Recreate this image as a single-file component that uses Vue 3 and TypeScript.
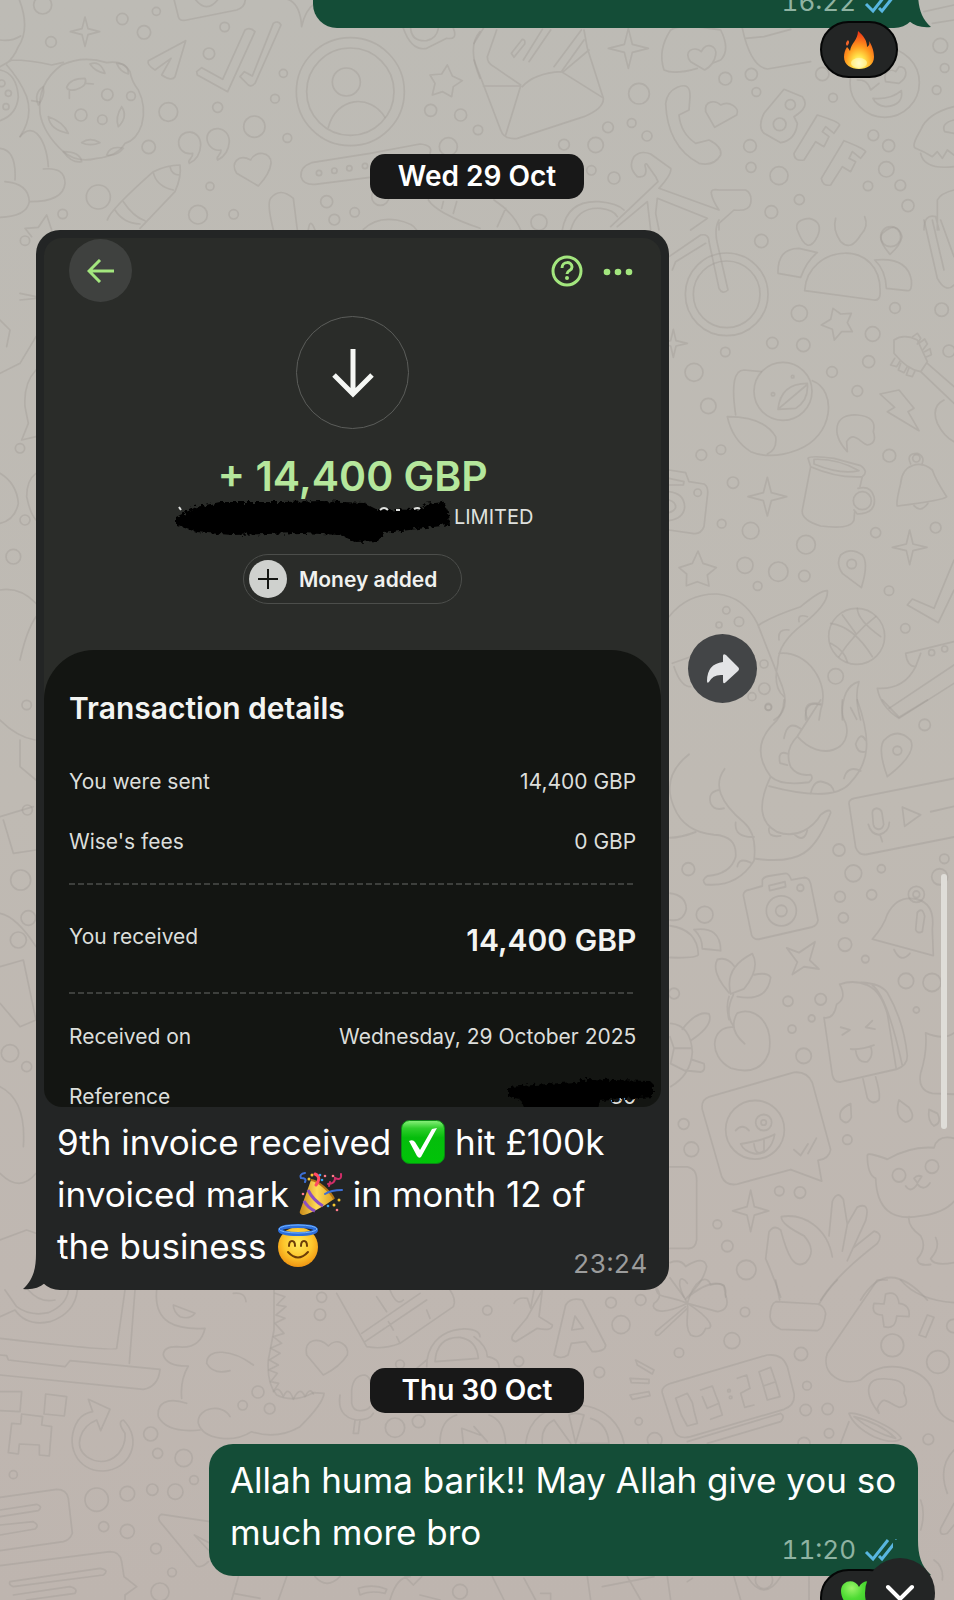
<script setup lang="ts">
interface Doodle {
  x: number
  y: number
  sy?: number
  paths: string[]
  dots: number[][]
}

interface Detail {
  label: string
  value: string
  kind: 'plain' | 'total' | 'hidden'
}

const UNIT = 1 / 3

const sparkle = (x: number, y: number, r: number): string => {
  const i = Math.round(r / 5)
  return `M${x} ${y - r}L${x + i} ${y - i}L${x + r} ${y}L${x + i} ${y + i}L${x} ${y + r}L${x - i} ${y + i}L${x - r} ${y}L${x - i} ${y - i}Z`
}

const place = (d: Doodle): string => `translate(${d.x} ${d.y}) scale(${UNIT} ${d.sy ?? UNIT})`

// Dots stay round in tiles whose vertical unit differs.
const dotHeight = (d: Doodle, r: number): number => (r * UNIT) / (d.sy ?? UNIT)

// Wallpaper tiles, drawn at three units per pixel.
const doodles: Doodle[] = [
  {
    x: 0,
    y: 0,
    paths: [
      'M50-20Q95 80 55 140Q40 175 20 190M0 120Q35 125 62 108M0 200L35 180Q90 180 155 195L190 187M20 195Q60 240 80 290Q100 350 60 410M0 210Q50 220 55 290Q50 345 0 362M95 302L118 306',
      'M185 195Q250 165 320 188Q370 180 390 215Q395 245 415 270Q440 320 425 375Q410 420 375 430Q350 470 290 475Q230 490 190 455Q130 400 120 340Q110 250 185 195Z',
      'M200 262Q210 235 255 235Q265 255 230 268Q205 275 200 262M258 250L280 252M208 275V295M270 192Q300 180 315 220Q285 215 270 192M350 190Q385 190 385 222Q360 215 350 190M130 260Q100 280 115 315Q135 290 130 260M145 350Q150 390 205 400Q190 365 145 350M245 428Q270 410 300 428Q270 440 245 428M365 320Q385 350 355 380Q345 350 365 320M190 455Q215 490 245 485Q240 455 190 455M320 465Q330 435 370 445Q350 470 320 465',
      'M60 410Q85 380 110 400Q140 430 145 500M130 507Q195 500 195 550Q190 605 90 605M0 445Q50 450 45 540M15 545Q85 550 88 605Q80 650 0 652',
      'M520-10L535 50Q540 65 560 60L710 30Q740 20 735-10M580-10Q620 50 660-10M850-5Q900 0 905 80M905 80Q915 30 945 10',
      'M557 122L525 230Q515 245 485 225L513 175L465 210Q440 195 445 182Z',
      'M590 215L605 203L668 238L735 90Q750 80 765 95L683 275L592 225ZM720 230L733 215L757 228L820 70Q835 60 843 75L765 250Q755 262 745 255Z',
      'M985 382C1010 290 1110 280 1155 352M1210 85Q1235 155 1280 145L1340 115Q1375 120 1360 85M1232 85Q1235 125 1280 122Q1310 115 1315 85M1440 95Q1400 140 1440 235',
      'M1342 195L1357 228L1387 242L1360 260L1355 290L1328 275L1297 285L1305 250L1290 225L1325 222Z',
      'M568 490C560 480 580 475 578 460C550 465 535 445 536 425C540 385 602 385 602 435Q600 475 568 490M653 480C645 470 665 465 663 450C635 455 620 430 621 412C625 375 687 375 688 425Q685 465 653 480',
      'M775 558L710 520C690 490 715 460 752 480C765 450 815 455 813 490Q810 520 775 558Z',
      'M322 660Q330 630 460 515Q500 495 540 495Q545 530 525 575L420 685M460 518Q470 560 520 570M345 630Q370 670 420 672M370 605Q400 650 435 662M510 500Q515 525 538 525',
      'M1110 460L1260 432Q1300 435 1290 460M1110 460L935 488Q900 500 903 530Q910 555 945 553L1110 532M820 690Q800 610 812 595Q840 560 880 595L892 690M925 690Q930 650 945 690M1090 688Q1130 650 1190 660Q1240 670 1250 690M1285 600Q1310 640 1440 685M1330 605L1325 625M1370 605L1360 640',
      'M75 685L95 710M78 685L115 682L140 645L155 690',
      sparkle(255, 95, 44)
    ],
    dots: [[128, 15, 27], [367, 57, 17], [432, 97, 20], [469, 34, 12], [153, 126, 16], [674, 81, 14], [627, 161, 17], [850, 220, 12], [825, 296, 13], [653, 322, 15], [505, 336, 28], [763, 380, 32], [862, 414, 13], [446, 441, 20], [630, 559, 12], [295, 591, 36], [594, 644, 28], [701, 643, 14], [188, 642, 14], [1292, 331, 18], [1382, 345, 18], [1345, 440, 27], [980, 605, 18], [1064, 637, 14], [1003, 659, 16], [1141, 590, 26], [1051, 275, 162], [1051, 275, 131], [1039, 246, 42], [322, 284, 17], [393, 288, 13], [243, 345, 18], [307, 359, 14], [957, 519, 8], [1003, 512, 8], [1048, 505, 8], [1095, 498, 8], [5, 250, 10], [25, 280, 9], [18, 320, 9]]
  },
  {
    x: 474,
    y: 0,
    paths: [
      'M0 130L28 85M68 90L40 170Q40 190 60 200L140 255M0 180L80 390Q90 420 130 415L330 350Q390 325 388 295L340 145L330 90M28 258H140L95 405M145 260Q180 220 262 215L385 292M262 215L330 120M268 215L345 150M112 160L145 118Q155 118 152 132L120 172ZM148 180L205 88M165 185L230 90M240 200L322 90',
      'M590 90Q550 150 570 210Q600 225 670 205M590 90Q620 70 740 90Q770 150 740 180L715 190M692 210L650 185C625 155 660 135 682 155C695 125 730 135 725 165Q720 195 692 210Z',
      'M805 85Q830 200 880 207L1010 185M815 115L870 110L950 88M1350 35L1440 15M1375 70L1440 60',
      'M610 262Q650 245 648 290L645 330L615 345Q620 400 665 430L705 420Q745 440 740 465Q720 500 675 490Q580 440 575 310Q580 275 610 262Z',
      'M722 382L695 335C690 300 725 300 740 315C765 300 800 325 788 345Z',
      'M930 268L870 340Q850 380 870 400L920 428Q965 420 970 370L960 350Q1010 320 985 290Z',
      'M1030 345L960 460Q960 485 990 480L1025 425L1050 440L1065 410L1045 395L1055 380L1080 400L1097 375Q1095 365 1030 345ZM1110 422L1042 535Q1045 560 1070 555L1105 500L1130 515L1145 485L1125 475L1135 455L1160 475L1175 455Q1170 445 1110 422Z',
      'M1275 200C1300 200 1305 230 1275 250L1235 245C1225 215 1250 205 1265 215ZM1150 240C1165 240 1180 240 1190 270L1215 250M1197 295Q1250 300 1282 272Q1290 315 1235 320Q1205 315 1197 295Z',
      'M1440 320Q1360 340 1340 390Q1310 440 1325 445Q1350 455 1375 470L1390 455L1405 475L1420 450L1440 465M1340 460Q1350 510 1440 500M1440 360Q1400 370 1412 395L1440 400',
      'M410 680L552 545L545 530L518 492Q510 490 515 505Q520 535 490 530Q460 500 480 470Q500 450 530 462L590 505Q595 520 555 565L735 630Q715 600 712 580Q710 565 735 570H815Q835 580 830 610Q825 635 780 630L735 670V690M550 595L545 640L555 690M550 595L700 655L650 690M430 680L520 605L530 690M265 690Q280 600 375 605Q430 610 450 630M290 690Q310 620 380 625Q420 630 430 650M60 600Q120 640 140 690M95 625L70 680M1390 690V600Q1400 580 1440 570M1350 690Q1350 640 1385 650L1395 690',
      sparkle(463, 145, 60)
    ],
    dots: [[495, 281, 31], [754, 236, 19], [832, 223, 18], [847, 276, 13], [1045, 222, 20], [1077, 293, 13], [1399, 137, 22], [1412, 204, 13], [1388, 270, 13], [402, 382, 16], [473, 369, 13], [519, 408, 15], [365, 435, 23], [270, 434, 16], [828, 438, 19], [831, 502, 15], [915, 527, 27], [1198, 406, 16], [1244, 437, 18], [1237, 508, 23], [1279, 556, 16], [1182, 558, 14], [1302, 617, 18], [976, 599, 15], [892, 636, 19], [420, 534, 18], [352, 511, 14], [12, 390, 14], [195, 667, 24], [1250, 710, 30], [917, 373, 19], [949, 314, 15], [1232, 248, 104]]
  },
  {
    x: 654,
    y: 220,
    paths: [
      'M45 110L140 45Q165 40 165 65L195 205Q205 225 222 210L190 70Q180 25 195 0M55 150L65 125L155 70M810 0L850 175Q875 220 900 195M835 0L870 150M860 0L900 110',
      'M372 160Q370 85 435 85L490 98Q460 120 440 172ZM452 212C460 70 690 50 678 225Q675 242 660 240ZM662 120Q760 110 772 180Q775 215 760 212L697 205Q695 150 662 120Z',
      'M465-5Q420 0 430 30Q460 110 490 50Q510 5 465-5M545-5Q535 30 560 65Q590 95 620 45Q645 20 632-10M708 103Q740 75 744 50Q730 0 685 40Q670 60 708 103Z',
      'M537 265L560 282L592 280L580 308L595 335L563 335L541 360L535 328L502 315L530 298Z',
      'M245 585Q225 450 270 450L322 455M475 482C550 510 540 650 430 690Q350 720 290 695Q235 660 220 590Q330 590 365 650Q370 690 340 702M372 568Q380 490 460 490Q465 540 425 565ZM375 565L458 495',
      'M580 695C530 640 540 580 610 585Q670 590 658 635Q670 670 640 675C620 670 600 630 578 665ZM678 522L735 510L780 565L762 575L795 632L700 575L722 562Z',
      'M720 360Q750 340 790 360L820 425L800 455Q760 450 720 400ZM820 430L900 500M800 455L900 550M870 540Q830 560 850 610Q870 650 900 665M776 350L790 340L800 355L790 372M795 370L812 357L820 372L806 390M812 395L828 386L832 404L815 412M722 415L710 435L728 440L737 425M740 430L733 450L750 458L760 440M765 443L757 465L775 470L782 455',
      'M462 715Q470 705 540 715L620 737Q645 755 625 770Q550 775 470 740ZM480 718Q550 715 615 752Q560 765 480 732ZM470 740L445 870Q440 900 500 918Q590 930 600 900L602 875M625 770L618 800M612 805Q650 795 660 830Q670 880 610 882L600 870',
      'M740 790C745 730 800 720 835 750Q845 780 878 830Q870 840 730 858Q725 850 740 790M780 857Q800 880 822 850M770 732Q755 700 790 700Q815 710 803 735',
      'M45 750L95 758L105 785L150 792Q165 800 160 830L150 920Q140 945 115 940L45 930M45 775L90 785L88 795L45 795M45 815Q90 820 92 860Q90 895 45 902M45 840Q65 845 65 862Q60 875 45 878',
      'M132 993L147 1030L187 1043L160 1065L165 1098L130 1085L97 1097L98 1062L75 1043L115 1030Z',
      'M622 1103L565 1060Q545 1030 560 1005Q590 980 625 1005Q645 1030 622 1103ZM900 1020L840 1165L775 1137L760 1155L853 1208L900 1110',
      'M45 1190Q100 1120 190 1122Q270 1130 310 1210L385 1400Q410 1470 360 1500M315 1215Q350 1190 440 1160Q500 1110 520 1112Q525 1150 450 1210Q370 1270 372 1330Q355 1400 390 1430M375 1300C460 1290 530 1390 500 1470L495 1500M375 1260Q370 1225 405 1230M435 1205Q430 1180 460 1190M455 1500Q450 1440 500 1455M55 1330L110 1310M60 1340Q80 1400 110 1400',
      'M530 1210Q600 1220 655 1310M610 1165Q610 1200 680 1250M530 1270Q570 1290 580 1325M555 1310Q600 1240 665 1190M565 1185L605 1240',
      'M755 1300L900 1265M755 1300Q760 1340 785 1340L800 1300M785 1340Q750 1410 670 1405Q680 1460 735 1495L900 1390M705 1465L900 1335M615 1385Q560 1400 565 1500M615 1385Q600 1430 620 1500',
      sparkle(340, 830, 58),
      sparkle(767, 982, 52),
      sparkle(58, 370, 42)
    ],
    dots: [[218, 223, 124], [218, 223, 100], [322, 63, 20], [436, 280, 24], [723, 264, 16], [863, 269, 20], [656, 342, 22], [448, 375, 20], [355, 369, 17], [214, 396, 14], [120, 457, 27], [163, 558, 23], [534, 456, 16], [644, 425, 18], [610, 513, 16], [885, 393, 18], [387, 514, 87], [357, 523, 5], [416, 470, 4], [142, 705, 16], [201, 689, 14], [706, 707, 19], [237, 788, 17], [203, 911, 13], [290, 932, 25], [456, 974, 28], [273, 1036, 24], [373, 1055, 29], [451, 1068, 17], [311, 1098, 13], [665, 938, 15], [845, 923, 16], [705, 1112, 14], [593, 1032, 14], [608, 1249, 84], [545, 1369, 23], [754, 1225, 14], [217, 1171, 11], [255, 1205, 14], [195, 1215, 9], [330, 1332, 12], [331, 1406, 17], [343, 1462, 9], [294, 1430, 12], [787, 715, 11], [625, 842, 27], [131, 818, 11], [833, 1298, 9], [872, 1287, 9]]
  },
  {
    x: 654,
    y: 700,
    sy: 0.3827,
    paths: [
      'M390 0Q390 40 350 70Q290 130 350 200Q380 225 465 215Q480 205 470 195Q430 200 410 175Q390 130 430 95L500 0M430 95C500 165 600 130 575 60Q560 40 565 0M610 0C650 100 650 160 590 215Q540 270 345 225M350 200Q290 310 370 345C430 365 480 330 500 300Q530 280 530 295C480 400 440 430 305 415M390 100Q400 50 440 75M460 50Q440 0 500 10M605 115Q620 80 635 105M635 135Q610 140 605 115M570 205Q580 170 620 185M470 245Q480 205 510 215Q535 220 540 240M345 335Q340 360 380 355M420 350Q450 375 460 340M400 140Q370 130 378 165L400 170M590 20L608 50',
      'M105 142Q20 200 60 280Q90 345 180 352Q250 355 245 410Q230 455 160 460Q140 470 155 482Q250 490 300 420Q310 350 270 320Q160 240 212 180M48 360Q80 360 125 345M195 235Q160 240 170 270Q180 290 210 283M245 320Q240 360 300 358M250 435Q255 410 290 425',
      'M585 270Q585 260 600 257L900 205M585 270L605 385Q615 408 640 403L900 358M655 295Q655 285 668 283Q682 285 684 295L689 325Q685 340 670 337Q660 335 658 325ZM643 325Q650 350 675 352Q705 345 706 320M678 352L685 370M745 280L800 300L752 330ZM830 292L900 278',
      'M685 0L735 45L820 0M700 200Q670 130 690 105Q730 70 770 105Q790 140 700 200',
      'M268 510Q270 498 285 496L325 486V470Q330 462 345 460L395 453Q405 453 412 470L450 464Q465 464 470 480L492 575Q490 588 475 593L315 625Q300 627 293 615ZM345 485L393 475L395 488L347 498Z',
      'M655 625Q690 590 700 560Q730 510 785 520Q845 530 835 600L838 668ZM785 600L790 555Q805 540 812 565L805 605Q790 612 785 600M720 652Q740 690 768 662',
      'M225 765Q170 710 190 678Q220 670 240 695M230 768Q210 700 295 663Q320 700 270 755L230 768M300 718Q340 710 350 725Q340 790 250 775M238 770Q210 820 240 855M225 775Q215 800 225 835M240 855C170 850 160 930 230 962Q320 985 345 920C360 840 300 800 250 818Q220 860 272 898',
      'M557 743Q600 730 640 745Q680 760 700 820L727 965L560 998Q540 1000 535 980L510 830Q540 835 548 795Q580 780 557 743M620 738Q680 740 700 765Q750 840 760 930Q760 955 727 965M655 745Q700 775 745 955M560 855L588 862L565 875M655 838L635 855L663 860M590 912Q620 915 660 902M605 915Q610 950 640 945Q660 930 650 905M627 990L640 1040Q655 1060 675 1045Q680 1030 665 985',
      'M145 1070Q140 1045 165 1037L420 973Q460 970 475 1000L530 1175Q525 1200 492 1203L503 1257L410 1227L250 1265Q215 1270 203 1245ZM245 1125Q265 1105 285 1125M260 1160Q330 1150 362 1135C355 1170 330 1190 300 1185Q270 1180 260 1160M300 1160Q305 1195 330 1178V1150M420 1175L440 1190L462 1160M462 1185L487 1145',
      'M590 1055Q550 1070 560 1095Q580 1115 592 1090ZM735 1045Q720 1090 755 1103Q790 1095 765 1065ZM825 1070Q820 1100 840 1113Q865 1105 850 1080Z',
      'M815 870Q870 890 900 870M815 870Q820 920 800 975Q790 1020 835 1028L900 1030M640 1190Q640 1180 700 1200Q770 1165 840 1170Q850 1135 900 1145M640 1190Q640 1240 665 1250Q670 1370 800 1348Q870 1340 900 1310M755 1270Q770 1290 790 1265Q810 1285 828 1262M780 1250Q790 1240 803 1245L790 1262ZM765 1350Q760 1375 800 1400Q820 1430 790 1460Q790 1480 830 1475M845 1405Q860 1430 830 1460Q840 1480 900 1470',
      'M380 1560Q360 1510 335 1460L345 1390Q360 1370 380 1385C400 1450 420 1490 455 1470Q490 1440 450 1400Q380 1370 382 1350C450 1340 520 1380 535 1455M525 1400L535 1310Q550 1280 568 1305L580 1370L565 1440M580 1370L610 1325Q650 1310 635 1360L580 1465M600 1430L660 1388Q690 1395 670 1420Q550 1500 500 1568M620 1568Q700 1450 820 1568',
      'M48 590Q130 600 133 665Q130 675 48 673M120 600Q200 590 200 655L145 650Q145 620 120 600M48 505Q95 510 97 545Q90 580 48 575M85 860Q130 810 165 820Q180 850 110 890M50 845Q110 850 115 920Q110 980 50 1010M60 910H112M60 910L48 880M60 910L50 950L95 970M115 940L150 950Q155 970 140 972L95 968M48 1220H100Q130 1225 128 1260V1410Q125 1435 100 1433H48M48 1470Q80 1460 95 1480Q150 1450 158 1480Q150 1520 95 1565Q170 1510 210 1530L215 1560M48 1510L90 1560',
      'M398 648L435 660L483 632L467 680L495 703L450 697L415 717L430 685Z',
      sparkle(290, 1335, 54)
    ],
    dots: [[343, 18, 10], [812, 65, 17], [730, 132, 13], [555, 392, 18], [598, 453, 25], [682, 441, 12], [871, 415, 14], [857, 462, 24], [103, 442, 19], [558, 514, 16], [653, 509, 15], [568, 569, 15], [573, 639, 20], [634, 677, 11], [382, 551, 45], [382, 551, 17], [439, 491, 10], [787, 508, 24], [787, 508, 10], [756, 734, 23], [834, 738, 27], [787, 810, 9], [402, 787, 15], [500, 782, 17], [473, 832, 10], [414, 860, 12], [449, 930, 23], [89, 1108, 16], [112, 1174, 22], [580, 1149, 14], [376, 1283, 14], [438, 1287, 17], [190, 1370, 13], [220, 1427, 17], [277, 1489, 29], [303, 1123, 88], [329, 1104, 24], [329, 1104, 8], [152, 561, 25], [735, 1242, 20], [834, 1219, 20], [60, 767, 16]]
  },
  {
    x: 0,
    y: 1280,
    paths: [
      'M0 110L45 90Q80 140 150 125Q225 100 232 30M15 30L50 80Q90 110 145 98Q200 75 205 30M85 30Q120 70 165 60M375 30L350 205Q345 215 0 175M405 30L388 250M0 225L20 227L25 240L195 260L210 242L480 268Q475 320 430 328L0 285',
      'M470 30C460 130 530 150 615 145Q600 210 530 200Q490 200 490 225Q500 260 565 258Q540 300 545 355M520 75L585 100Q570 120 540 110Q520 95 520 75M700 40Q735 35 738 65M760 255C700 210 620 200 620 250Q640 285 690 272M560 370C500 350 470 370 475 410Q500 460 600 450M690 410C670 370 590 380 595 430C610 480 700 490 755 455Q830 480 900 440Q970 370 972 340L940 338Q880 370 830 345Q800 310 805 240L822 150V30',
      'M825 40L855 50L830 75L858 80L828 105L855 115L825 130L852 160L820 170L845 190L812 205L840 220L808 240L835 255L806 270L832 280L812 305L836 310L820 335Q835 315 850 350Q865 315 880 358Q900 315 915 350Q930 320 940 342',
      'M970 285L920 225C910 175 960 170 985 198C1010 170 1050 195 1042 225Q1020 260 970 285ZM1010 40L1100 200Q1150 210 1200 190L1360 80Q1370 60 1350 30M1085 160L1260 40M1095 185L1280 60M1130 50L1160 95M1165 125L1180 150M1190 170L1200 190M1280 90L1290 115M1170 30Q1190 80 1210 60M1280 260C1280 130 1440 130 1440 170M1305 245Q1310 170 1380 172Q1430 180 1435 235ZM1250 265L1280 240',
      'M1055 330Q1060 285 1095 285Q1110 290 1112 310M1055 330V370Q1060 395 1085 392Q1105 390 1110 380M1020 345Q1010 410 1070 420Q1110 420 1120 400M1065 420L1060 460H1075L1080 420M1320 490Q1320 420 1370 405M1385 445L1440 465M1385 445L1390 490',
      'M0 335L65 335L60 395L0 392M137 342L200 350L193 408L132 402ZM65 402L128 410L125 435L155 440L148 528L118 525V495L58 492L55 522L25 518L35 430L62 432Z',
      'M265 358L330 388L302 452L290 420C240 440 220 500 260 530C320 570 380 520 375 460Q350 425 370 420C430 480 390 570 310 573C230 575 190 490 235 420Q250 400 278 395Z',
      'M0 652L170 628Q200 628 205 655L217 760Q210 780 190 785L0 812M0 690L110 673Q130 680 115 692L0 710M0 735L100 725Q120 735 105 747L0 765M0 857L330 815Q360 815 365 845L372 890L410 920L375 945V960M30 905L300 865Q330 870 310 885L40 920Q25 915 30 905M40 945L210 920Q235 925 225 940L80 960',
      'M630 725L485 703Q470 710 480 725L590 858Q605 865 625 845M583 765L630 790M583 765L625 810M715 890L695 960M860 890L835 960M700 940L780 955M945 890Q980 930 1020 890M1170 960Q1190 890 1230 890M1215 890L1240 915L1265 890M1075 925Q1120 910 1160 928L1155 940Q1110 930 1080 945ZM1260 945L1320 960'
    ],
    dots: [[965, 52, 15], [960, 104, 17], [1200, 253, 13], [774, 336, 18], [728, 376, 14], [809, 386, 16], [452, 462, 21], [473, 520, 15], [551, 534, 26], [582, 600, 13], [457, 629, 17], [526, 635, 23], [382, 641, 22], [290, 659, 35], [311, 740, 15], [382, 754, 21], [468, 806, 16], [516, 877, 13], [480, 936, 27], [40, 584, 12], [1185, 443, 29], [1256, 424, 19], [1380, 935, 22]]
  },
  {
    x: 474,
    y: 1280,
    paths: [
      'M120 70Q130 50 160 55L170 85L180 30M205 30L195 110L235 135Q235 155 190 145L125 185Q105 180 120 160L158 115ZM240 225L275 75Q290 50 325 60L395 195Q395 215 355 215L335 185L292 190L282 225Q260 240 240 225M293 150L303 108L328 145Z',
      'M640 70C570 40 550 60 545 20M640 70C560 110 530 90 540 70Q570 50 545 20M640 70C600 0 620 -20 640 10M640 70C660 0 700 -20 710 15Q760 0 755 45Q770 90 730 95L640 70C720 120 720 150 695 145Q680 180 650 165C630 140 645 100 640 70M635 80L545 155Q540 170 555 165L640 85',
      'M905 65Q890 70 888 110Q890 135 920 148L1030 152Q1050 145 1055 100Q1050 75 1030 72ZM917 60L905 0M1035 72Q1060 30 1090 0M1240 0L1210 0L1060 220C1040 280 1100 320 1160 300Q1210 250 1280 262Q1370 280 1380 350Q1390 410 1440 425M1280 0Q1330 60 1440 68',
      'M1235 42Q1270 30 1275 70Q1310 75 1305 110L1268 108Q1265 150 1230 140L1225 105Q1190 105 1200 70L1230 72ZM1335 165L1360 105L1380 112L1355 172ZM1215 400C1170 340 1170 290 1240 297Q1300 300 1290 340Q1310 380 1275 382C1240 370 1230 340 1210 385ZM1125 400C1150 395 1260 440 1282 475Q1260 495 1200 470Q1140 440 1125 400ZM1140 410Q1200 460 1265 475Q1220 430 1140 410M1125 425L1100 490',
      'M565 340Q560 320 590 310L880 225Q925 220 940 260L960 340Q965 375 930 388L650 470Q610 480 600 450ZM640 485L920 400Q935 410 920 425L700 490M485 240L540 270L535 282L490 255ZM468 295L525 298V310L472 308ZM468 345L525 335L528 347L475 358Z',
      'M605 355L640 340L655 368L660 392L670 430L640 438L622 405ZM680 330L715 318L725 345L735 370L700 385L685 350M735 372L745 405L710 418M790 295L818 285L828 325L800 340L812 382L840 375M855 275L890 262L905 305L868 318ZM868 318L880 360L918 350L905 305',
      'M0 170Q40 200 40 230Q75 235 75 262M45 405Q90 420 95 490M0 440L40 485M155 490Q170 380 300 375C400 375 440 440 450 490M205 490Q200 440 240 420L290 490M285 405Q300 395 330 405L305 490ZM350 415Q400 430 405 490L320 490M1440 510Q1390 560 1420 640M1440 670L1400 745Q1395 770 1420 760L1440 735M1340 660Q1355 700 1340 750',
      'M55 890L90 960M150 895L185 960M340 890L350 960M385 920L540 890M460 890L500 960M580 890L590 960M780 890L800 960M200 940H230V960M640 905L655 895M820 890Q870 970 920 890M1005 890V960M1380 840Q1410 860 1405 900'
    ],
    dots: [[40, 91, 14], [134, 244, 15], [411, 68, 16], [500, 60, 16], [441, 134, 27], [376, 277, 16], [615, 218, 14], [774, 182, 24], [813, 96, 14], [981, 222, 20], [999, 317, 13], [995, 390, 17], [1061, 387, 17], [1065, 460, 14], [1363, 478, 16], [494, 424, 11], [542, 480, 22], [1255, 196, 34], [1392, 246, 34], [765, 332, 4], [770, 352, 4], [1438, 138, 20], [990, 490, 18], [870, 900, 26]]
  },
  {
    x: 0,
    y: 220,
    paths: [
      'M60 240L108 235M60 220L108 230M75 560Q70 490 108 450M75 560L85 610L65 660L108 650M0 300L30 330L20 380M108 760Q80 780 80 830Q90 880 108 900M108 350L60 430L0 460M0 760Q50 790 55 850Q45 900 0 910M0 1110Q60 1100 108 1150M60 1320Q80 1230 108 1190M0 1500Q50 1550 105 1560M60 1560V1640L108 1680M0 1790L100 1760M10 1800L40 1900L108 1890M0 2080Q50 2090 108 2180M0 2240L70 2220L108 2400M0 2350L60 2420L108 2400M0 2600Q80 2640 70 2780M0 2860Q60 2920 108 2860M0 3060L80 3030L108 3040'
    ],
    dots: [[75, 62, 14], [75, 900, 15], [60, 685, 14], [40, 1010, 22], [80, 1455, 14], [82, 1770, 15], [62, 1980, 30], [85, 2094, 22], [55, 2160, 24], [30, 2500, 26], [80, 2540, 15]]
  }
]

const details: Detail[] = [
  { label: 'You were sent', value: '14,400 GBP', kind: 'plain' },
  { label: "Wise's fees", value: '0 GBP', kind: 'plain' },
  { label: 'You received', value: '14,400 GBP', kind: 'total' },
  { label: 'Received on', value: 'Wednesday, 29 October 2025', kind: 'plain' },
  { label: 'Reference', value: '30', kind: 'hidden' }
]
</script>

<template>
  <main class="chat">
    <svg class="wallpaper" viewBox="0 0 954 1600" preserveAspectRatio="xMidYMin slice" aria-hidden="true">
      <g v-for="(d, i) in doodles" :key="i" :transform="place(d)">
        <path v-for="(p, k) in d.paths" :key="`p${k}`" :d="p" />
        <ellipse v-for="(c, k) in d.dots" :key="`c${k}`" :cx="c[0]" :cy="c[1]" :rx="c[2]" :ry="dotHeight(d, c[2])" />
      </g>
    </svg>

    <article class="bubble sent earlier">
      <div class="body">
        <p class="stamp">
          <time>16:22</time>
          <svg class="ticks" viewBox="0 0 34 24" role="img" aria-label="Read"><path d="M2 14l7 7L24 2M15 18l3 3L33 2" /></svg>
        </p>
      </div>
      <svg class="tail right" viewBox="0 0 38 36" aria-hidden="true"><path d="M0 0H25C25 15 28 26 38 35C29 36 22 34 16 29C11 34 5 35 0 35Z" /></svg>
      <button class="reaction" type="button" aria-label="Fire reaction">
        <svg width="34" height="42" viewBox="0 0 34 42" aria-hidden="true">
          <defs>
            <radialGradient id="flame" cx=".5" cy=".85" r=".8">
              <stop offset="0" stop-color="#fffbd0" /><stop offset=".25" stop-color="#ffe24a" /><stop offset=".55" stop-color="#ff9b1e" /><stop offset="1" stop-color="#f03a17" />
            </radialGradient>
          </defs>
          <path fill="url(#flame)" d="M16 2C22 7 25 12 25 18C27 17 28 15 27 12C31 18 32 24 32 28C32 36 25 40 17 40C9 40 2 36 2 28C2 24 3 21 5 18C6 19 7 20 8 22C9 14 16 11 16 2Z" />
          <path fill="#f0632a" d="M6 11C8 13 7 15 5 17C3 15 4 13 6 11Z" />
          <ellipse cx="17" cy="34" rx="8" ry="5" fill="#fffbc0" opacity=".6" />
        </svg>
      </button>
    </article>

    <h2 class="day">Wed 29 Oct</h2>

    <div class="incoming">
      <article class="bubble received">
        <section class="shot">
          <header class="bar">
            <button class="back" type="button" aria-label="Back">
              <svg width="28" height="24" viewBox="0 0 28 24" aria-hidden="true"><path d="M27 12H2M13 1L2 12L13 23" /></svg>
            </button>
            <button class="plain" type="button" aria-label="Help">
              <svg width="32" height="32" viewBox="0 0 32 32" aria-hidden="true"><circle cx="16" cy="16" r="14" /><path d="M11 13C11 6 21 6 21 12C21 16 16 15 16 19" /><circle class="solid" cx="16" cy="23" r="2" /></svg>
            </button>
            <button class="plain" type="button" aria-label="More">
              <svg class="more" width="30" height="10" viewBox="0 0 30 10" aria-hidden="true"><circle cx="4" cy="6" r="3.3" /><circle cx="15" cy="6" r="3.3" /><circle cx="26" cy="6" r="3.3" /></svg>
            </button>
          </header>
          <div class="arrow">
            <svg width="44" height="50" viewBox="0 0 44 50" aria-hidden="true"><path d="M22 1V46M3 27L22 46L41 27" /></svg>
          </div>
          <h3 class="amount">+ 14,400 GBP</h3>
          <p class="payer">
            <svg class="scribble" width="280" height="48" viewBox="0 0 280 48" aria-hidden="true">
              <defs>
                <filter id="rough" x="-5%" y="-20%" width="110%" height="140%"><feTurbulence type="fractalNoise" baseFrequency="0.25" numOctaves="3" seed="4" /><feDisplacementMap in="SourceGraphic" scale="7" /></filter>
              </defs>
              <path filter="url(#rough)" d="M4 18L24 8L48 3L110 3L150 2L192 4L204 10L246 11L254 5L272 3L276 12L277 26L246 30L212 34L206 42L184 43L168 36L130 34L60 36L24 33L4 26Z" />
              <path class="trace" d="M208 11Q212 7 216 11M224 11H228M242 10Q246 8 248 10M7 8L9 11" />
            </svg>
            <span>LIMITED</span>
          </p>
          <p class="added">
            <span class="plus"><svg width="20" height="20" viewBox="0 0 20 20" aria-hidden="true"><path d="M10 0V20M0 10H20" /></svg></span>
            Money added
          </p>
          <section class="sheet">
            <h4>Transaction details</h4>
            <dl>
              <div v-for="d in details" :key="d.label" class="row" :class="d.kind">
                <dt>{{ d.label }}</dt>
                <dd>
                  {{ d.value }}
                  <svg v-if="d.kind === 'hidden'" class="cover" width="152" height="34" viewBox="0 0 152 34" aria-hidden="true">
                    <path filter="url(#rough)" d="M4 10L30 8L70 5L84 2L110 3L146 4L150 8V20L120 22L96 24L94 32H20L16 22L4 20Z" />
                  </svg>
                </dd>
              </div>
            </dl>
          </section>
        </section>
        <div class="body caption">
          <p class="text">
            9th invoice received
            <svg class="emoji" viewBox="0 0 44 44" role="img" aria-label="check mark">
              <defs><linearGradient id="tile" x2="0" y2="1"><stop offset="0" stop-color="#8af07c" /><stop offset=".18" stop-color="#2fce2c" /><stop offset=".4" stop-color="#05bd0c" /><stop offset="1" stop-color="#00c408" /></linearGradient></defs>
              <rect x=".5" y=".5" width="43" height="43" rx="8" fill="url(#tile)" stroke="#0a8a14" />
              <path fill="#fff" d="M8 21Q12 19 14 22L19 30L31 9L36 8L20 37Q18 39 16 36Z" />
            </svg>
            hit £100k invoiced mark
            <svg class="emoji" viewBox="0 0 44 44" role="img" aria-label="party popper">
              <defs><linearGradient id="cone" x2="1"><stop offset="0" stop-color="#c98a18" /><stop offset=".5" stop-color="#ffdb57" /><stop offset="1" stop-color="#dca021" /></linearGradient></defs>
              <path fill="url(#cone)" d="M12 8C18 8 32 20 35 27C27 33 13 41 5 43C2 43 0 41 1 39Z" />
              <path fill="none" stroke="#8c4fc0" stroke-width="3" d="M9 18Q14 28 24 34M5 29Q9 36 16 39" />
              <path fill="none" stroke="#b87815" stroke-width="2" d="M12 8C18 8 32 20 35 27" />
              <g fill="none" stroke-width="3" stroke-linecap="round">
                <path stroke="#3c6fd6" stroke-width="2" d="M6 1Q0 2 2 6Q8 6 6 10M26 22Q32 18 43 18" />
                <path stroke="#ff4a63" d="M16 2Q23 5 17 13" />
                <path stroke="#d02e68" stroke-width="2" d="M30 14L31 10M29 12Q36 12 36 6Q43 9 42 2" />
              </g>
              <g fill="#f7c62f"><circle cx="10" cy="7" r="1.5" /><circle cx="40" cy="28" r="1.5" /><circle cx="35" cy="33" r="1.5" /><circle cx="13" cy="3" r="1.5" /></g>
              <g fill="#38a3f4"><circle cx="21" cy="3" r="1.3" /><circle cx="23" cy="8" r="1.3" /><circle cx="29" cy="34" r="1.3" /></g>
              <g fill="#ff7a8a"><circle cx="26" cy="4" r="1.3" /><circle cx="38" cy="38" r="1.3" /><circle cx="34" cy="4" r="1.3" /><circle cx="4" cy="22" r="1.3" /></g>
            </svg>
            in month 12 of the business
            <svg class="emoji" viewBox="0 0 44 44" role="img" aria-label="halo face">
              <defs><radialGradient id="face" cx=".5" cy=".4" r=".6"><stop offset="0" stop-color="#ffec5f" /><stop offset=".6" stop-color="#fdc62c" /><stop offset="1" stop-color="#ef9512" /></radialGradient></defs>
              <circle cx="22" cy="23" r="20" fill="url(#face)" />
              <ellipse cx="22" cy="6" rx="18" ry="4" fill="none" stroke="#2d6fdb" stroke-width="4" />
              <ellipse cx="22" cy="5" rx="19" ry="4" fill="none" stroke="#74b5ff" stroke-width="1" />
              <path fill="none" stroke="#6b3d08" stroke-width="2" stroke-linecap="round" d="M13 22Q13 17 16 17T19 22M25 22Q25 17 28 17T31 22M12 28Q22 39 32 28" />
            </svg>
          </p>
          <p class="stamp"><time>23:24</time></p>
        </div>
        <svg class="tail left" viewBox="0 0 38 36" aria-hidden="true"><path d="M38 0H13C13 15 10 26 0 35C9 36 16 34 22 29C27 34 33 35 38 35Z" /></svg>
      </article>
      <button class="forward" type="button" aria-label="Forward">
        <svg width="34" height="30" viewBox="0 0 34 30" aria-hidden="true"><path d="M17 2Q17-1 20 1L32 13Q34 15 32 17L20 28Q17 31 17 27V21Q7 20 3 28Q1 30 1 27Q1 10 17 8Z" /></svg>
      </button>
    </div>

    <h2 class="day">Thu 30 Oct</h2>

    <article class="bubble sent">
      <div class="body">
        <p class="text">Allah huma barik!! May Allah give you so much more bro</p>
        <p class="stamp">
          <time>11:20</time>
          <svg class="ticks" viewBox="0 0 34 24" role="img" aria-label="Read"><path d="M2 14l7 7L24 2M15 18l3 3L33 2" /></svg>
        </p>
      </div>
      <svg class="tail right" viewBox="0 0 38 36" aria-hidden="true"><path d="M0 0H25C25 15 28 26 38 35C29 36 22 34 16 29C11 34 5 35 0 35Z" /></svg>
      <button class="reaction" type="button" aria-label="Green heart reaction">
        <svg width="38" height="36" viewBox="0 0 38 36" aria-hidden="true">
          <defs><radialGradient id="love" cx=".3" cy=".2" r=".9"><stop offset="0" stop-color="#9cf46a" /><stop offset=".35" stop-color="#4fdc34" /><stop offset="1" stop-color="#22b51c" /></radialGradient></defs>
          <path fill="url(#love)" d="M19 35C7 27 1 19 1 11C1 0 15-2 19 7C23-2 37 0 37 11C37 19 31 27 19 35Z" />
        </svg>
      </button>
    </article>

    <button class="jump" type="button" aria-label="Scroll to latest">
      <svg width="30" height="18" viewBox="0 0 30 18" aria-hidden="true"><path d="M3 3L15 15L27 3" /></svg>
    </button>
    <div class="scrollbar" aria-hidden="true"></div>
  </main>
</template>

<style>
body {
  margin: 0;
}
</style>

<style scoped>
.chat {
  position: relative;
  box-sizing: border-box;
  height: 100vh;
  padding: 0 36px;
  overflow: hidden;
  display: flex;
  flex-direction: column;
  background: linear-gradient(#bdbbb5, #bfbab3 50%, #bfb7b1 80%, #beb5af);
  font-family: Inter, 'Liberation Sans', sans-serif;
  color: #fff;
}
p, h2, h3, h4, dl, dd {
  margin: 0;
}
button {
  padding: 0;
  border: 0;
  background: none;
  display: flex;
  align-items: center;
  justify-content: center;
  cursor: pointer;
}
.wallpaper {
  position: absolute;
  inset: 0;
  width: 100%;
  height: 100%;
  fill: none;
  stroke: #9d9892;
  stroke-opacity: 0.38;
  stroke-width: 5;
  stroke-linejoin: round;
  stroke-linecap: round;
}
.bubble {
  position: relative;
  box-sizing: border-box;
  flex-shrink: 0;
  border-radius: 24px;
}
.sent {
  align-self: flex-end;
  width: 80.4%;
  padding: 10px 20px 11px 21px;
  background: #144d37;
}
.earlier {
  width: 68.6%;
  min-height: 132px;
  margin-top: -104px;
  display: flex;
  align-items: flex-end;
  justify-content: flex-end;
}
.received {
  width: 71.8%;
  padding: 8px 8px 11px;
  background: #232525;
}
.body {
  display: grid;
}
.body > * {
  grid-area: 1 / 1;
}
.text {
  padding-bottom: 7px;
  font-size: 35px;
  line-height: 52px;
}
.caption {
  padding: 9px 14px 0 13px;
}
.emoji {
  width: 44px;
  height: 44px;
  vertical-align: -9px;
}
.stamp {
  align-self: end;
  justify-self: end;
  display: flex;
  align-items: center;
  gap: 8px;
  font-size: 26px;
  line-height: 30px;
  font-variant-numeric: tabular-nums;
  color: #9b9c9c;
}
.sent .stamp {
  color: #8fb3a2;
}
.ticks {
  width: 34px;
  height: 24px;
  fill: none;
  stroke: #58b6e0;
  stroke-width: 3;
}
.tail {
  position: absolute;
  bottom: 0;
  width: 38px;
  height: 36px;
}
.tail.right {
  right: -13px;
  fill: #144d37;
}
.tail.left {
  left: -13px;
  fill: #232525;
}
.reaction {
  position: absolute;
  right: 20px;
  bottom: -50px;
  box-sizing: border-box;
  width: 78px;
  height: 57px;
  border: 2px solid #050606;
  border-radius: 29px;
  background: #232525;
}
.day {
  position: relative;
  align-self: center;
  flex-shrink: 0;
  box-sizing: border-box;
  min-width: 214px;
  padding: 0 24px;
  border-radius: 15px;
  background: #181818;
  font-size: 28px;
  font-weight: 600;
  line-height: 45px;
  text-align: center;
}
.earlier + .day {
  margin-top: 126px;
}
.incoming {
  display: flex;
  align-items: flex-start;
  gap: 19px;
  margin: 31px 0 78px;
}
.incoming + .day {
  margin-bottom: 31px;
}
.forward {
  flex: none;
  position: relative;
  width: 69px;
  height: 69px;
  margin-top: 404px;
  border-radius: 50%;
  background: #434547;
}
.forward svg {
  fill: #e3e4e6;
}
.shot {
  overflow: hidden;
  border-radius: 18px;
  background: #2a2c29;
  display: flex;
  flex-direction: column;
  align-items: center;
}
.bar {
  align-self: stretch;
  display: flex;
  align-items: center;
  gap: 20px;
  padding: 1px 28px 0 25px;
}
.back {
  width: 63px;
  height: 63px;
  margin-right: auto;
  border-radius: 50%;
  background: #3f413f;
}
.back svg,
.plain svg {
  fill: none;
  stroke: #a3e67e;
  stroke-width: 3;
}
.plain .solid,
.plain .more {
  fill: #a3e67e;
  stroke: none;
}
.arrow {
  box-sizing: border-box;
  width: 113px;
  height: 113px;
  margin-top: 14px;
  border: 1px solid #5b5d5a;
  border-radius: 50%;
  display: flex;
  align-items: center;
  justify-content: center;
}
.arrow svg {
  fill: none;
  stroke: #f5f7f4;
  stroke-width: 5;
}
.amount {
  margin-top: 21px;
  font-size: 41px;
  font-weight: 600;
  line-height: 52px;
  color: #b5e79c;
}
.payer {
  display: flex;
  gap: 2px;
  height: 28px;
  margin-top: 1px;
  font-size: 20px;
  line-height: 28px;
  color: #dfe1de;
}
.scribble {
  margin-top: -4px;
}
.trace {
  fill: none;
  stroke: #dfe1de;
  stroke-width: 2;
}
.added {
  box-sizing: border-box;
  display: flex;
  align-items: center;
  gap: 12px;
  height: 50px;
  margin-top: 23px;
  padding: 0 24px 0 5px;
  border: 1px solid #4c4e4b;
  border-radius: 26px;
  font-size: 21px;
  font-weight: 600;
  color: #f0f1ef;
}
.plus {
  width: 38px;
  height: 38px;
  border-radius: 50%;
  background: #cfd1ce;
  display: flex;
  align-items: center;
  justify-content: center;
}
.plus svg {
  stroke: #141613;
  stroke-width: 2;
}
.sheet {
  align-self: stretch;
  margin-top: 46px;
  padding: 38px 25px 0;
  border-radius: 50px 50px 0 0;
  background: #131512;
}
.sheet h4 {
  margin-bottom: 40px;
  font-size: 30px;
  font-weight: 600;
  line-height: 40px;
  color: #f3f4f2;
}
.row {
  display: flex;
  justify-content: space-between;
  margin-bottom: 32px;
  font-size: 21px;
  line-height: 28px;
  color: #dcdedb;
}
.row.total {
  margin: -5px 0 29px;
  padding: 37px 0 34px;
  line-height: 34px;
  background:
    repeating-linear-gradient(90deg, #3d3f3c 0 6px, transparent 6px 9px) top / 100% 2px no-repeat,
    repeating-linear-gradient(90deg, #3d3f3c 0 6px, transparent 6px 9px) bottom / 100% 2px no-repeat;
}
.total dd {
  font-size: 30px;
  font-weight: 600;
  line-height: 40px;
  color: #f3f4f2;
}
.row.hidden {
  height: 24px;
  margin-bottom: 0;
}
.hidden dd {
  position: relative;
}
.cover {
  position: absolute;
  right: -20px;
  top: -6px;
}
.jump {
  position: absolute;
  right: 19px;
  bottom: -28px;
  width: 70px;
  height: 70px;
  border-radius: 50%;
  background: #232525;
}
.jump svg {
  fill: none;
  stroke: #fff;
  stroke-width: 4;
  stroke-linecap: round;
}
.scrollbar {
  position: absolute;
  right: 7px;
  top: 874px;
  width: 6px;
  height: 255px;
  border-radius: 3px;
  background: #dfddd8;
}
</style>
